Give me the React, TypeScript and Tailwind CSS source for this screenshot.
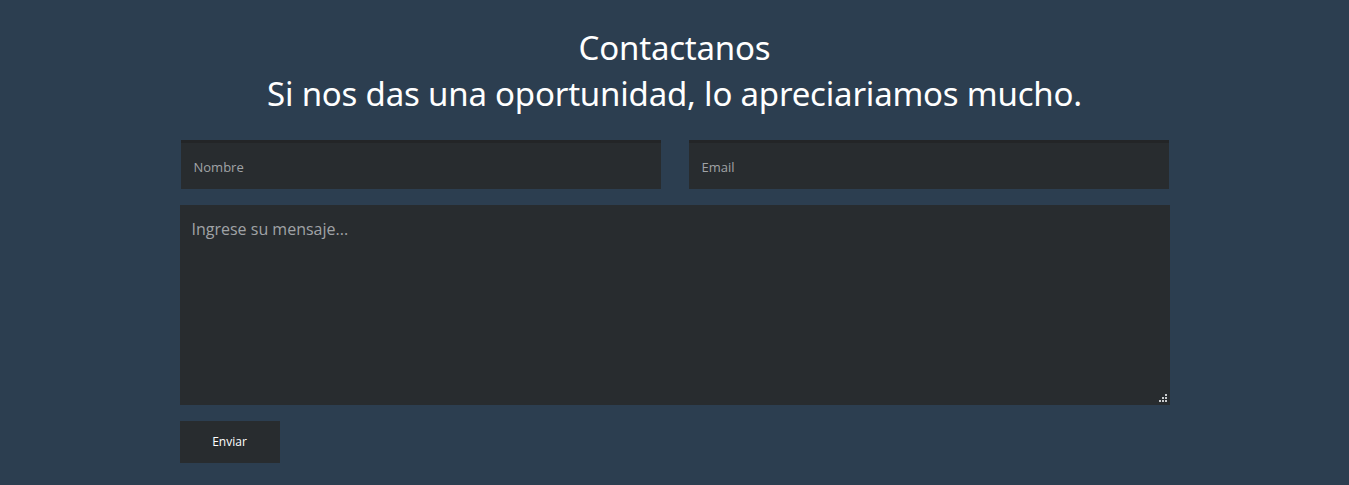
import React from 'react';

const Grip: React.FC = () => (
  <svg width="10" height="10" viewBox="0 0 10 10" className="absolute right-[2px] bottom-[2px] pointer-events-none">
    <g fill="#c9cbcd">
      <rect x="7" y="1" width="2" height="2" />
      <rect x="4" y="4" width="2" height="2" />
      <rect x="7" y="4" width="2" height="2" />
      <rect x="1" y="7" width="2" height="2" />
      <rect x="4" y="7" width="2" height="2" />
      <rect x="7" y="7" width="2" height="2" />
    </g>
  </svg>
);

const App: React.FC = () => {
  return (
    <section className="min-h-[485px] w-full bg-[#2c3e50] pt-[25px] pb-[22px]" style={{ fontFamily: '"Open Sans", sans-serif' }}>
      <div className="mx-auto w-[990px]">
        {/* Heading */}
        <h2 className="text-center text-[33px] leading-[46px] text-white font-normal tracking-[-0.2px]" style={{ fontFamily: '"Noto Sans", sans-serif' }}>
          Contactanos
          <br />
          Si nos das una oportunidad, lo apreciariamos mucho.
        </h2>

        <form className="mt-[23px] flex flex-col">
          <div className="flex gap-[28px] px-px">
            <input
              type="text"
              placeholder="Nombre"
              className="h-[49px] w-[480px] bg-[#282c2f] border-t-[3px] border-[#232527] px-[13px] pt-[2px] text-[13px] text-white placeholder:text-[#a0a3a6] outline-none"
            />
            <input
              type="email"
              placeholder="Email"
              className="h-[49px] w-[480px] bg-[#282c2f] border-t-[3px] border-[#232527] px-[13px] pt-[2px] text-[13px] text-white placeholder:text-[#a0a3a6] outline-none"
            />
          </div>

          <div className="relative mt-[16px] h-[200px] w-[990px]">
            <textarea
              placeholder="Ingrese su mensaje..."
              className="block h-full w-full resize-none bg-[#282c2f] px-[12px] py-[12px] text-[16px] text-white placeholder:text-[#a0a3a6] outline-none"
            />
            <Grip />
          </div>

          <button
            type="button"
            className="mt-[16px] h-[42px] w-[100px] bg-[#282c2f] text-[12px] text-white"
          >
            Enviar
          </button>
        </form>
      </div>
    </section>
  );
};

export default App;
